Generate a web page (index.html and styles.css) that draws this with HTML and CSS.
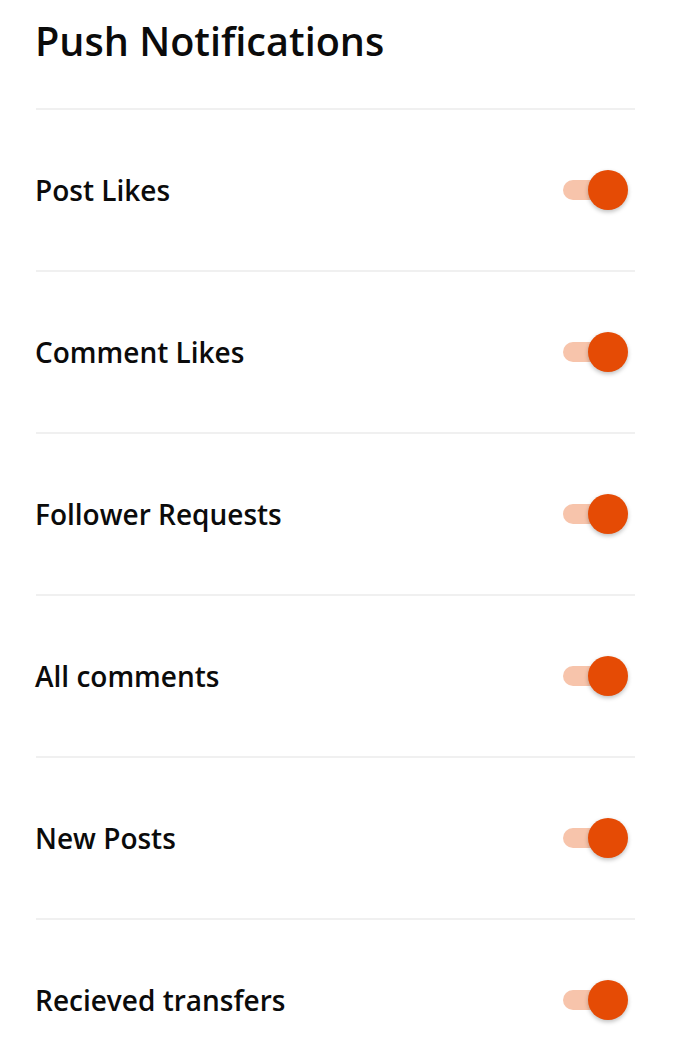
FILE: index.html
```html
<!DOCTYPE html>
<html lang="en">
	<head>
		<meta charset="UTF-8" />
		<meta name="viewport" content="width=device-width, initial-scale=1.0" />
		<title>Push Notifications</title>
		<link rel="stylesheet" href="styles.css">
	</head>
	<body>
		<div class="settings">
			<h1 class="title">Push Notifications</h1>
			<div class="row">
				<p class="label">Post Likes</p>
				<div class="toggle on"><span class="track"></span><span class="thumb"></span></div>
			</div>
			<div class="row">
				<p class="label">Comment Likes</p>
				<div class="toggle on"><span class="track"></span><span class="thumb"></span></div>
			</div>
			<div class="row">
				<p class="label">Follower Requests</p>
				<div class="toggle on"><span class="track"></span><span class="thumb"></span></div>
			</div>
			<div class="row">
				<p class="label">All comments</p>
				<div class="toggle on"><span class="track"></span><span class="thumb"></span></div>
			</div>
			<div class="row">
				<p class="label">New Posts</p>
				<div class="toggle on"><span class="track"></span><span class="thumb"></span></div>
			</div>
			<div class="row">
				<p class="label">Recieved transfers</p>
				<div class="toggle on"><span class="track"></span><span class="thumb"></span></div>
			</div>
		</div>
	</body>
</html>
```

FILE: styles.css
```css
* {
	margin: 0;
	padding: 0;
	box-sizing: border-box;
}
body {
	background-color: #fff;
	font-family: "Open Sans", "Noto Sans", sans-serif;
	color: #111;
}
.settings {
	width: 635px;
	padding-left: 36px;
}
.title {
	height: 108px;
	font-size: 39.6px;
	font-weight: 600;
	line-height: 1;
	padding-top: 22px;
	margin-left: -1px;
	color: #0b0b0b;
}
.row {
	height: 162px;
	display: flex;
	align-items: center;
	justify-content: space-between;
	border-top: 2px solid #f0f0f0;
	padding-right: 7px;
}
.label {
	font-size: 28px;
	font-weight: 600;
	margin-left: -1px;
	color: #0b0b0b;
}
.toggle {
	position: relative;
	width: 65px;
	height: 40px;
	display: flex;
	align-items: center;
}
.toggle .track {
	width: 48px;
	height: 20px;
	border-radius: 10px;
	background-color: #f7c4ab;
}
.toggle .thumb {
	position: absolute;
	right: 0;
	top: 0;
	width: 40px;
	height: 40px;
	border-radius: 50%;
	background-color: #e54b05;
	box-shadow: 0 2px 4px rgba(0, 0, 0, 0.25);
}
```
